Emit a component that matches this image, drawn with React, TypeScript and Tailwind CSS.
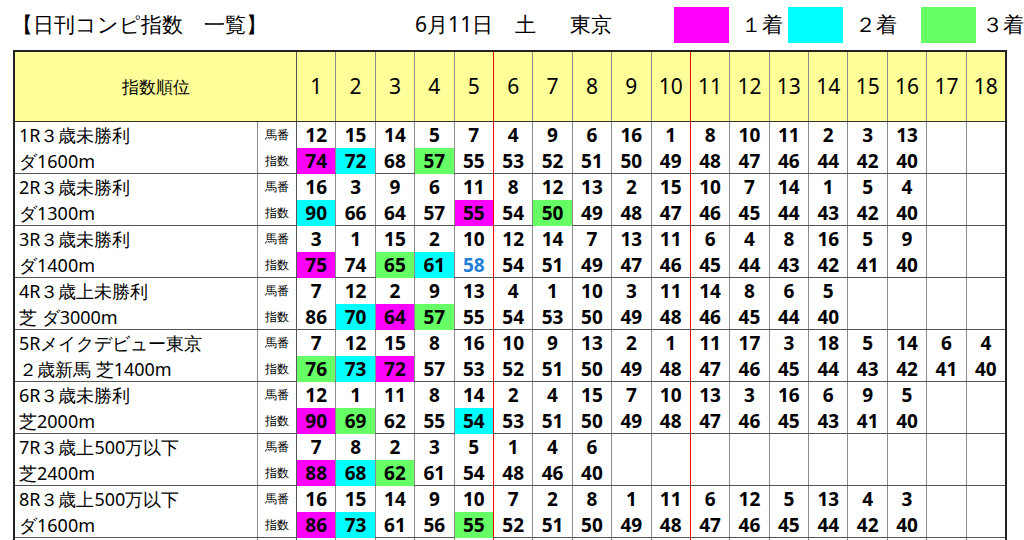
const M = "bg-[#ff00ff]";
const C = "bg-[#00ffff]";
const G = "bg-[#66ff66]";

type Race = { l1: string; l2: string; nums: number[]; idx: number[]; col: Record<number, string>; blue?: number };

const RACES: Race[] = [
  { l1: "1R３歳未勝利", l2: "ダ1600m", nums: [12, 15, 14, 5, 7, 4, 9, 6, 16, 1, 8, 10, 11, 2, 3, 13], idx: [74, 72, 68, 57, 55, 53, 52, 51, 50, 49, 48, 47, 46, 44, 42, 40], col: { 0: M, 1: C, 3: G } },
  { l1: "2R３歳未勝利", l2: "ダ1300m", nums: [16, 3, 9, 6, 11, 8, 12, 13, 2, 15, 10, 7, 14, 1, 5, 4], idx: [90, 66, 64, 57, 55, 54, 50, 49, 48, 47, 46, 45, 44, 43, 42, 40], col: { 0: C, 4: M, 6: G } },
  { l1: "3R３歳未勝利", l2: "ダ1400m", nums: [3, 1, 15, 2, 10, 12, 14, 7, 13, 11, 6, 4, 8, 16, 5, 9], idx: [75, 74, 65, 61, 58, 54, 51, 49, 47, 46, 45, 44, 43, 42, 41, 40], col: { 0: M, 2: G, 3: C }, blue: 4 },
  { l1: "4R３歳上未勝利", l2: "芝 ダ3000m", nums: [7, 12, 2, 9, 13, 4, 1, 10, 3, 11, 14, 8, 6, 5], idx: [86, 70, 64, 57, 55, 54, 53, 50, 49, 48, 46, 45, 44, 40], col: { 1: C, 2: M, 3: G } },
  { l1: "5Rメイクデビュー東京", l2: "２歳新馬 芝1400m", nums: [7, 12, 15, 8, 16, 10, 9, 13, 2, 1, 11, 17, 3, 18, 5, 14, 6, 4], idx: [76, 73, 72, 57, 53, 52, 51, 50, 49, 48, 47, 46, 45, 44, 43, 42, 41, 40], col: { 0: G, 1: C, 2: M } },
  { l1: "6R３歳未勝利", l2: "芝2000m", nums: [12, 1, 11, 8, 14, 2, 4, 15, 7, 10, 13, 3, 16, 6, 9, 5], idx: [90, 69, 62, 55, 54, 53, 51, 50, 49, 48, 47, 46, 45, 43, 41, 40], col: { 0: M, 1: G, 4: C } },
  { l1: "7R３歳上500万以下", l2: "芝2400m", nums: [7, 8, 2, 3, 5, 1, 4, 6], idx: [88, 68, 62, 61, 54, 48, 46, 40], col: { 0: M, 1: C, 2: G } },
  { l1: "8R３歳上500万以下", l2: "ダ1600m", nums: [16, 15, 14, 9, 10, 7, 2, 8, 1, 11, 6, 12, 5, 13, 4, 3], idx: [86, 73, 61, 56, 55, 52, 51, 50, 49, 48, 47, 46, 45, 44, 42, 40], col: { 0: M, 1: C, 4: G } },
];

const COLS = Array.from({ length: 18 }, (_, i) => i);
const jp = "font-['Noto_Sans_CJK_JP',sans-serif]";
const num = "font-['DejaVu_Sans',sans-serif] font-bold";

function border(i: number) {
  return i === 4 || i === 9 ? "border-r border-r-[#ff0000]" : "border-r border-r-[#8c8c8c]";
}

export default function App() {
  return (
    <div className={`w-[1024px] h-[540px] overflow-hidden bg-white text-black ${jp}`}>
      <div className="h-[50px] flex items-center text-[21px] whitespace-nowrap">
        <div className="pl-[12px] w-[425px]">【日刊コンピ指数　一覧】</div>
        <div className="w-[265px] flex">
          <span>6月11日</span>
          <span className="ml-[22px]">土</span>
          <span className="ml-[34px]">東京</span>
        </div>
        <div className="shrink-0 w-[55px] h-[36px] bg-[#ff00ff]" />
        <span className="ml-[12px] w-[48px]">１着</span>
        <div className="shrink-0 w-[55px] h-[36px] bg-[#00ffff]" />
        <span className="ml-[12px] w-[68px]">２着</span>
        <div className="shrink-0 w-[55px] h-[36px] bg-[#66ff66]" />
        <span className="ml-[6px]">３着</span>
      </div>
      <div className="ml-[13px] w-[994px] border-2 border-[#222] border-b-0">
        <div className="flex h-[70px] bg-[#ffff99] border-b border-[#333]">
          <div className="w-[282px] flex items-center justify-center text-[17px] border-r border-r-[#555]">指数順位</div>
          {COLS.map((i) => (
            <div key={i} className={`flex-1 flex items-center justify-center text-[21px] font-['DejaVu_Sans',sans-serif] ${border(i)} last:border-r-0`}>{i + 1}</div>
          ))}
        </div>
        {RACES.map((r) => (
          <div key={r.l1} className="flex h-[52px] border-b border-[#555]">
            <div className="w-[243px] flex flex-col text-[18px] leading-[26px] pl-[4px] border-r border-r-[#8c8c8c] whitespace-nowrap">
              <div>{r.l1}</div>
              <div>{r.l2}</div>
            </div>
            <div className="w-[39px] flex flex-col text-[12px] leading-[26px] items-center border-r border-r-[#555]">
              <div>馬番</div>
              <div>指数</div>
            </div>
            {COLS.map((i) => (
              <div key={i} className={`flex-1 flex flex-col text-[19px] leading-[26px] text-center ${num} ${border(i)} last:border-r-0`}>
                <div>{r.nums[i] ?? ""}</div>
                <div className={`${r.col[i] ?? ""} ${r.blue === i ? "text-[#1e7fd6]" : ""}`}>{r.idx[i] ?? ""}</div>
              </div>
            ))}
          </div>
        ))}
        <div className="flex h-[20px]">
          <div className="w-[243px] border-r border-r-[#8c8c8c]" />
          <div className="w-[39px] border-r border-r-[#555]" />
          {COLS.map((i) => (
            <div key={i} className={`flex-1 ${border(i)} last:border-r-0`} />
          ))}
        </div>
      </div>
    </div>
  );
}
